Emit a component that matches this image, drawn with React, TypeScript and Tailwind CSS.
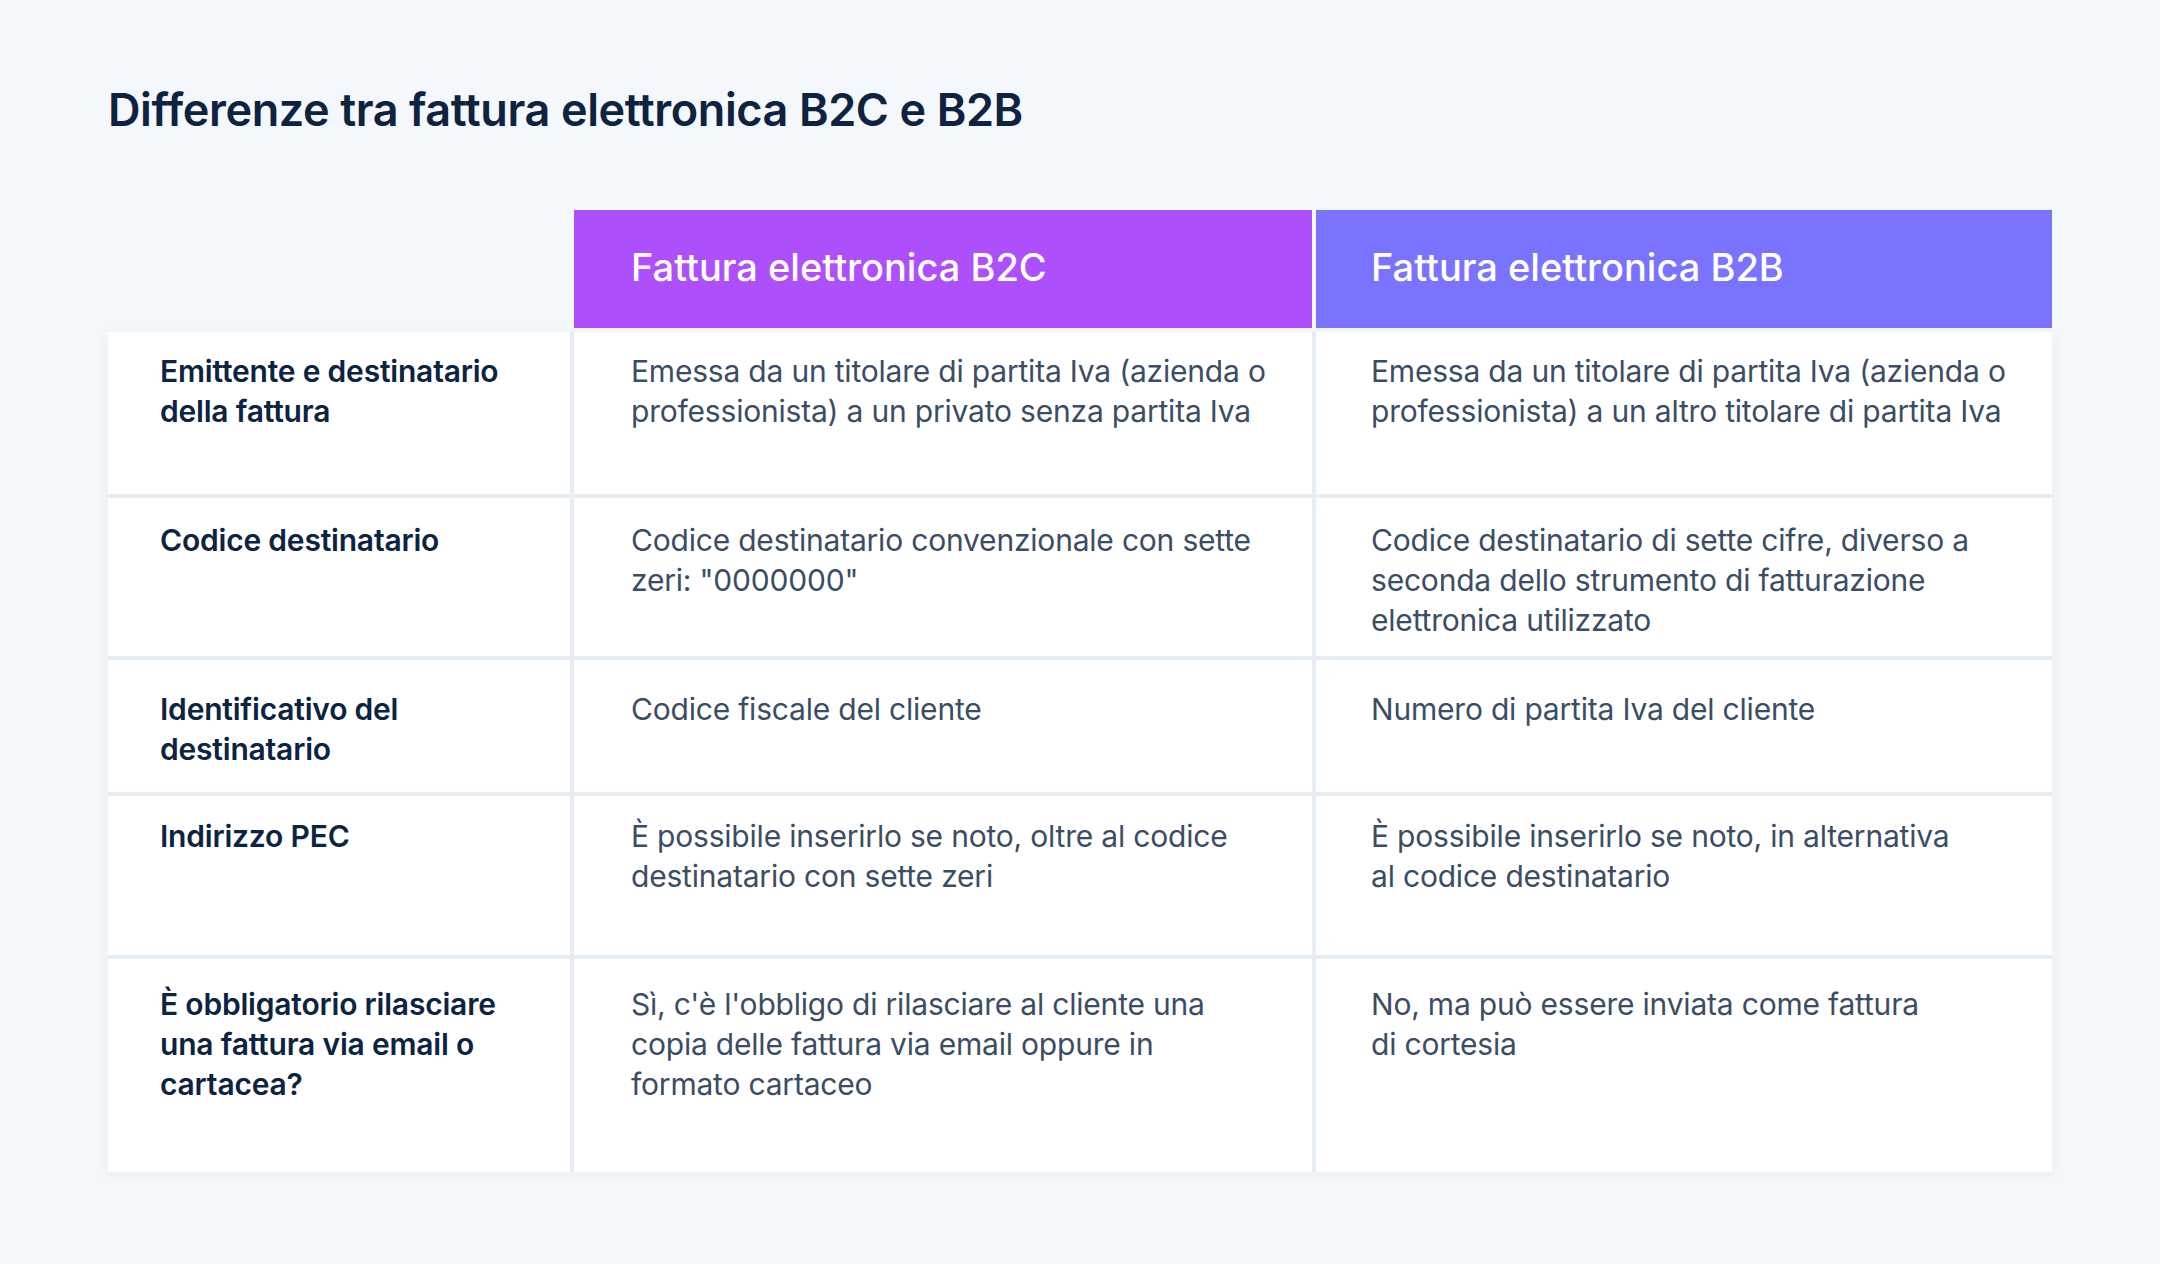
const rows = [
  {
    label: 'Emittente e destinatario della fattura',
    b2c: 'Emessa da un titolare di partita Iva (azienda o professionista) a un privato senza partita Iva',
    b2b: 'Emessa da un titolare di partita Iva (azienda o professionista) a un altro titolare di partita Iva',
    h: 'h-[162px]',
    pt: 'pt-[19px]',
  },
  {
    label: 'Codice destinatario',
    b2c: 'Codice destinatario convenzionale con sette zeri: "0000000"',
    b2b: 'Codice destinatario di sette cifre, diverso a seconda dello strumento di fatturazione elettronica utilizzato',
    h: 'h-[158px]',
    pt: 'pt-[22px]',
  },
  {
    label: 'Identificativo del destinatario',
    b2c: 'Codice fiscale del cliente',
    b2b: 'Numero di partita Iva del cliente',
    h: 'h-[132px]',
    pt: 'pt-[29px]',
  },
  {
    label: 'Indirizzo PEC',
    b2c: 'È possibile inserirlo se noto, oltre al codice destinatario con sette zeri',
    b2b: (
      <>
        È possibile inserirlo se noto, in alternativa
        <br />
        al codice destinatario
      </>
    ),
    h: 'h-[159px]',
    pt: 'pt-[20px]',
  },
  {
    label: 'È obbligatorio rilasciare una fattura via email o cartacea?',
    b2c: (
      <>
        Sì, c'è l'obbligo di rilasciare al cliente una
        <br />
        copia delle fattura via email oppure in
        <br />
        formato cartaceo
      </>
    ),
    b2b: (
      <>
        No, ma può essere inviata come fattura
        <br />
        di cortesia
      </>
    ),
    h: 'h-[213px]',
    pt: 'pt-[25px]',
  },
];

function App() {
  return (
    <div className="min-h-screen bg-[#f4f7fb] px-[108px] pt-[82px] font-['Inter',sans-serif]">
      <h1 className="text-[45px] font-semibold leading-[56px] tracking-[-0.4px] text-[#0d2340]">
        Differenze tra fattura elettronica B2C e B2B
      </h1>

      <div className="mt-[72px] w-[1944px]">
        <div className="grid grid-cols-[462px_738px_736px] gap-x-[4px]">
          <div />
          <div className="flex h-[118px] items-center bg-[#ad4ffb] pl-[57px] pb-[4px] text-[38px] font-medium text-white">
            Fattura elettronica B2C
          </div>
          <div className="flex h-[118px] items-center bg-[#7a73ff] pl-[55px] pb-[4px] text-[38px] font-medium text-white">
            Fattura elettronica B2B
          </div>
        </div>

        <div className="mt-[4px] grid grid-cols-[462px_738px_736px] gap-[4px] bg-[#e7edf5] shadow-[0_2px_12px_rgba(30,60,110,0.05)]">
          {rows.map((row) => (
            <div key={row.label} className="contents">
              <div
                className={`${row.h} ${row.pt} bg-white pl-[52px] pr-[30px] text-[30px] font-semibold leading-[40px] tracking-[-0.2px] text-[#0c2442]`}
              >
                {row.label}
              </div>
              <div
                className={`${row.h} ${row.pt} bg-white pl-[57px] pr-[30px] text-[30px] leading-[40px] tracking-[-0.2px] text-[#3b4d65]`}
              >
                {row.b2c}
              </div>
              <div
                className={`${row.h} ${row.pt} bg-white pl-[55px] pr-[30px] text-[30px] leading-[40px] tracking-[-0.2px] text-[#3b4d65]`}
              >
                {row.b2b}
              </div>
            </div>
          ))}
        </div>
      </div>
    </div>
  );
}

export default App;
